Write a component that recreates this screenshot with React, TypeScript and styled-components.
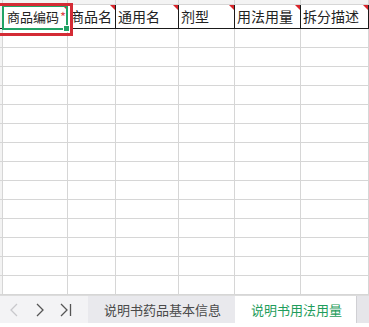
import styled, { createGlobalStyle } from 'styled-components'

const GlobalStyle = createGlobalStyle`
  html, body {
    margin: 0;
    padding: 0;
    background: #ffffff;
  }
  body {
    font-family: 'Noto Sans CJK SC', 'Noto Sans', sans-serif;
  }
`

const COLUMNS = '3px 65px 48px 63px 56px 66px 1fr'
const ROW_COUNT = 14

const headers = ['商品编码', '商品名', '通用名', '剂型', '用法用量', '拆分描述']

const Page = styled.div`
  width: 369px;
  height: 327px;
  display: flex;
  flex-direction: column;
  overflow: hidden;
  background: #fff;
`

const Sheet = styled.div`
  position: relative;
  flex: 1;
  overflow: hidden;
`

const Grid = styled.div`
  display: grid;
  grid-template-columns: ${COLUMNS};
`

const TopStrip = styled.div`
  height: 5px;
  box-sizing: border-box;
  background: #f3f3f3;
  border-right: 1px solid #d6d6d6;
  border-bottom: 1px solid #d6d6d6;
`

const HeadCell = styled.div<{ $gutter?: boolean }>`
  position: relative;
  height: 24px;
  box-sizing: border-box;
  border-right: 1px solid ${(p) => (p.$gutter ? '#d6d6d6' : '#1a1a1a')};
  border-bottom: 1px solid #1a1a1a;
  background: ${(p) => (p.$gutter ? '#f3f3f3' : '#fff')};
  font-size: 14px;
  line-height: 23px;
  color: #222;
  padding-left: 2px;
  white-space: nowrap;

  &::after {
    content: '';
    display: ${(p) => (p.$gutter ? 'none' : 'block')};
    position: absolute;
    top: 0;
    right: 0;
    border-top: 5px solid #d9252b;
    border-left: 5px solid transparent;
  }
`

const FirstLabel = styled.span`
  font-size: 13px;
  margin-left: 2px;
`

const Star = styled.span`
  color: #e0474b;
  font-size: 13px;
  margin-left: 1px;
  position: relative;
  z-index: 3;
`

const Cell = styled.div<{ $gutter?: boolean }>`
  height: 19px;
  box-sizing: border-box;
  border-right: 1px solid #d6d6d6;
  border-bottom: 1px solid #d6d6d6;
  background: ${(p) => (p.$gutter ? '#f3f3f3' : '#fff')};
`

const Highlight = styled.div`
  position: absolute;
  left: -3px;
  top: 3px;
  width: 76px;
  height: 33px;
  box-sizing: border-box;
  border: 3px solid #d42b35;
  pointer-events: none;
`

const Selection = styled.div`
  position: absolute;
  left: 2px;
  top: 5px;
  width: 66px;
  height: 25px;
  box-sizing: border-box;
  border: 2px solid #21a366;
  pointer-events: none;

  &::after {
    content: '';
    position: absolute;
    right: -4px;
    bottom: -4px;
    width: 5px;
    height: 5px;
    background: #21a366;
    border: 1px solid #fff;
  }
`

const TabBar = styled.div`
  height: 28px;
  margin-bottom: 4px;
  display: flex;
  align-items: stretch;
  background: #f3f3f5;
  border-top: 1px solid #dcdcdc;
  box-sizing: border-box;
`

const Nav = styled.div`
  width: 88px;
  display: flex;
  align-items: center;
  padding-left: 1px;
  box-sizing: border-box;
`

const NavButton = styled.span<{ $disabled?: boolean }>`
  width: 26px;
  display: flex;
  justify-content: center;
  align-items: center;
  color: ${(p) => (p.$disabled ? '#c8c8cc' : '#555')};
`

const Tab = styled.div<{ $active?: boolean }>`
  display: flex;
  align-items: center;
  justify-content: center;
  padding: 0 14px 0 16px;
  font-size: 13px;
  color: ${(p) => (p.$active ? '#1f9d5c' : '#4a4a4a')};
  background: ${(p) => (p.$active ? '#ffffff' : '#e9e9ed')};
  white-space: nowrap;
`

const TabRest = styled.div`
  flex: 1;
  background: #e6e6ea;
  border-left: 1px solid #d0d0d4;
`

const Chevron = ({ dir }: { dir: 'left' | 'right' }) => (
  <svg width="8" height="14" viewBox="0 0 8 14" fill="none" stroke="currentColor" strokeWidth="1.3">
    {dir === 'left' ? <path d="M7 1 1 7l6 6" /> : <path d="M1 1l6 6-6 6" />}
  </svg>
)

const LastIcon = () => (
  <svg width="12" height="14" viewBox="0 0 12 14" fill="none" stroke="currentColor" strokeWidth="1.3">
    <path d="M1 1l6 6-6 6" />
    <path d="M10.5 1v12" />
  </svg>
)

export default function App() {
  return (
    <Page>
      <GlobalStyle />
      <Sheet>
        <Grid>
          {Array.from({ length: 7 }).map((_, i) => (
            <TopStrip key={`t${i}`} />
          ))}
          <HeadCell $gutter />
          {headers.map((h, i) =>
            i === 0 ? (
              <HeadCell key={h}>
                <FirstLabel>{h}</FirstLabel>
                <Star>*</Star>
              </HeadCell>
            ) : (
              <HeadCell key={h}>{h}</HeadCell>
            )
          )}
          {Array.from({ length: ROW_COUNT }).map((_, r) =>
            Array.from({ length: 7 }).map((_, c) => <Cell key={`${r}-${c}`} $gutter={c === 0} />)
          )}
        </Grid>
        <Selection />
        <Highlight />
      </Sheet>
      <TabBar>
        <Nav>
          <NavButton $disabled>
            <Chevron dir="left" />
          </NavButton>
          <NavButton>
            <Chevron dir="right" />
          </NavButton>
          <NavButton>
            <LastIcon />
          </NavButton>
        </Nav>
        <Tab>说明书药品基本信息</Tab>
        <Tab $active>说明书用法用量</Tab>
        <TabRest />
      </TabBar>
    </Page>
  )
}
